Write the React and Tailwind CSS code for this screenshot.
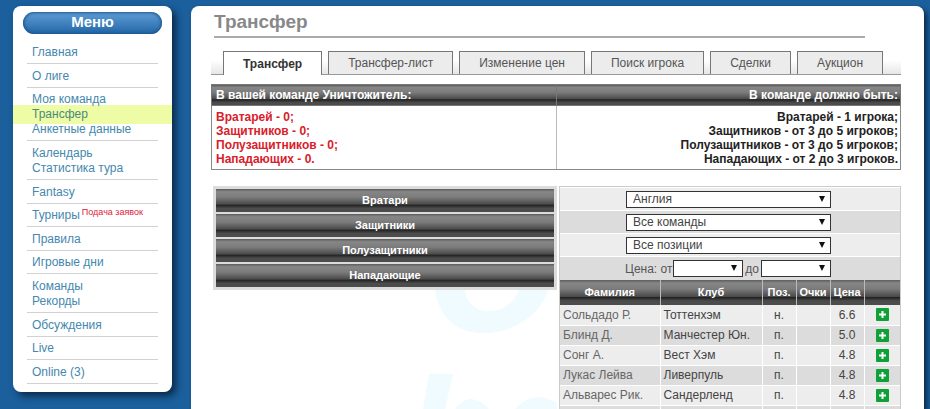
import React from 'react';

const menu = [
    [{ label: 'Главная' }],
    [{ label: 'О лиге' }],
    [{ label: 'Моя команда' }, { label: 'Трансфер', active: true }, { label: 'Анкетные данные' }],
    [{ label: 'Календарь' }, { label: 'Статистика тура' }],
    [{ label: 'Fantasy' }],
    [{ label: 'Турниры', note: 'Подача заявок' }],
    [{ label: 'Правила' }],
    [{ label: 'Игровые дни' }],
    [{ label: 'Команды' }, { label: 'Рекорды' }],
    [{ label: 'Обсуждения' }],
    [{ label: 'Live' }],
    [{ label: 'Online (3)' }],
];

const tabs = ['Трансфер', 'Трансфер-лист', 'Изменение цен', 'Поиск игрока', 'Сделки', 'Аукцион'];

const lines = ['Вратари', 'Защитники', 'Полузащитники', 'Нападающие'];

const players = [
    { name: 'Сольдадо Р.', club: 'Тоттенхэм', pos: 'н.', price: '6.6' },
    { name: 'Блинд Д.', club: 'Манчестер Юн.', pos: 'п.', price: '5.0' },
    { name: 'Сонг А.', club: 'Вест Хэм', pos: 'п.', price: '4.8' },
    { name: 'Лукас Лейва', club: 'Ливерпуль', pos: 'п.', price: '4.8' },
    { name: 'Альварес Рик.', club: 'Сандерленд', pos: 'п.', price: '4.8' },
    { name: '', club: '', pos: '', price: '' },
];

const bar = 'bg-[linear-gradient(#5c5c5c_0%,#868686_12%,#7c7c7c_35%,#4a4a4a_66%,#232323_70%,#4c4c4c_84%,#4c4c4c_100%)]';

function Select({ label, value, className }) {
    return (
        <div className={`relative ${className}`}>
            <select
                aria-label={label}
                defaultValue={value}
                className="block h-[17px] w-full appearance-none border border-[#333] bg-white pl-1.5 text-xs leading-[14px] text-[#444]"
            >
                <option>{value}</option>
            </select>
            <svg className="pointer-events-none absolute top-[5px] right-1.5 h-1.5 w-1.5" viewBox="0 0 6 6">
                <path d="M0 0h6L3 6z" fill="#111" />
            </svg>
        </div>
    );
}

function Sidebar() {
    return (
        <nav className="w-[159px] shrink-0 self-start rounded-lg bg-white pt-1.5 pb-2 shadow-[4px_4px_7px_#0a2a4a]">
            <h2 className="mx-2.5 h-[22px] rounded-full bg-linear-to-b from-[#5f9fd6] to-[#2265a6] text-center text-[15px] leading-[20px] font-bold text-white shadow-[inset_0_0_3px_1px_#1b5590]">
                Меню
            </h2>
            <ul className="mt-[7px] flex min-h-[343px] flex-col justify-between text-xs leading-[15px] text-[#4488ae]">
                {menu.map((group) => (
                    <li key={group[0].label} className="pt-1 after:mx-3.5 after:mt-[3px] after:block after:h-px after:bg-[#d2d2d2]">
                        {group.map((item) => (
                            <a
                                key={item.label}
                                href="#"
                                className={item.active ? '-my-0.5 block bg-[#eefca6] py-0.5 pl-[19px] text-[#4a8a80]' : 'relative block pl-[19px]'}
                            >
                                {item.label}
                                {item.note && <sup className="ml-0.5 text-[9px] text-[#e0203a]">{item.note}</sup>}
                            </a>
                        ))}
                    </li>
                ))}
            </ul>
        </nav>
    );
}

function Tabs() {
    return (
        <div className="mt-[13px] flex gap-1.5 border-b border-[#999] bg-linear-to-b from-white from-40% to-[#e6e6e6] px-3">
            {tabs.map((tab, i) => (
                <button
                    key={tab}
                    type="button"
                    className={
                        i === 0
                            ? '-mb-px h-6 border border-b-0 border-[#777] bg-white px-[19px] text-xs font-bold text-[#333]'
                            : 'h-[23px] border border-b-0 border-[#777] bg-[#ececec] px-[19px] text-xs text-[#555]'
                    }
                >
                    {tab}
                </button>
            ))}
        </div>
    );
}

function Summary() {
    return (
        <table className="mt-[9px] w-full table-fixed border-collapse text-xs leading-[14px] font-bold">
            <thead>
                <tr className={`h-[21px] text-white ${bar}`}>
                    <th className="border border-[#777] py-0 pr-0.5 pl-1 text-left">В вашей команде Уничтожитель:</th>
                    <th className="border border-[#777] border-l-[#aaa] py-0 pr-0.5 pl-1 text-right">В команде должно быть:</th>
                </tr>
            </thead>
            <tbody>
                <tr>
                    <td className="border border-[#888] border-r-[#bbb] pt-1 pr-0.5 pb-[3px] pl-1 text-[#d8202a]">
                        Вратарей - 0;<br />Защитников - 0;<br />Полузащитников - 0;<br />Нападающих - 0.
                    </td>
                    <td className="border border-[#888] pt-1 pr-0.5 pb-[3px] pl-1 text-right text-[#222]">
                        Вратарей - 1 игрока;<br />Защитников - от 3 до 5 игроков;<br />Полузащитников - от 3 до 5 игроков;<br />Нападающих - от 2 до 3 игроков.
                    </td>
                </tr>
            </tbody>
        </table>
    );
}

function Market() {
    return (
        <div className="w-[342px] shrink-0 border border-b-0 border-[#ccc] bg-white">
            <div className="flex flex-col pt-px text-xs text-[#555]">
                {[['Страна', 'Англия'], ['Команда', 'Все команды'], ['Позиция', 'Все позиции']].map(([label, value], i) => (
                    <div key={label} className={`flex h-[23px] items-center border-b border-white pl-[66px] ${i % 2 ? 'bg-[#dcdcdc]' : 'bg-[#ededed]'}`}>
                        <Select label={label} value={value} className="w-[205px]" />
                    </div>
                ))}
                <div className="flex h-[23px] items-center bg-[#dcdcdc] pl-[65px]">
                    <span className="w-12">Цена: от</span>
                    <Select label="Цена от" value="" className="w-[70px]" />
                    <span className="w-[18px] text-center">до</span>
                    <Select label="Цена до" value="" className="w-[70px]" />
                </div>
            </div>
            <table className="w-full table-fixed border-collapse text-xs">
                <colgroup>
                    <col className="w-[100px]" />
                    <col />
                    <col className="w-[34px]" />
                    <col className="w-[34px]" />
                    <col className="w-[34px]" />
                    <col className="w-[36px]" />
                </colgroup>
                <thead>
                    <tr className={`h-[25px] text-[11px] text-white ${bar}`}>
                        {['Фамилия', 'Клуб', 'Поз.', 'Очки', 'Цена', ''].map((h, i) => (
                            <th key={i} className="border-r border-[#bbb] p-0 last:border-r-0">{h}</th>
                        ))}
                    </tr>
                </thead>
                <tbody>
                    {players.map((p, i) => (
                        <tr key={i} className="h-5 text-[#444] odd:bg-[#ededed] even:bg-[#dcdcdc]">
                            <td className="border-r border-b border-white py-0 pl-[3px] text-[#666]">{p.name}</td>
                            <td className="border-r border-b border-white py-0 pl-[3px]">{p.club}</td>
                            <td className="border-r border-b border-white p-0 text-center">{p.pos}</td>
                            <td className="border-r border-b border-white p-0" />
                            <td className="border-r border-b border-white p-0 text-center">{p.price}</td>
                            <td className="border-b border-white p-0">
                                <button type="button" aria-label="Купить" className="mx-auto block h-[13px] w-[13px]">
                                    <svg viewBox="0 0 13 13">
                                        <rect width="13" height="13" rx="1" fill="#10a038" />
                                        <path d="M6.5 3v7M3 6.5h7" stroke="#fff" strokeWidth="2" />
                                    </svg>
                                </button>
                            </td>
                        </tr>
                    ))}
                </tbody>
            </table>
        </div>
    );
}

function Watermark() {
    return (
        <svg className="pointer-events-none absolute top-[104px] right-0 h-[119px] w-[140px]" viewBox="0 0 140 119" fill="#f0fbff">
            <path d="M18 0C22 28 40 43 66 43 98 43 124 24 131 0H102C96 14 86 21 72 21 58 21 49 12 48 0z" />
            <path d="M12 84h24l-8 35H6z" />
            <path d="M38 119q15-20 34 0zM98 119q18-20 42-6v6z" />
        </svg>
    );
}

export default function App() {
    return (
        <div className="flex h-screen gap-[19px] overflow-hidden bg-[#1b5f9c] pt-1.5 pr-1.5 pl-[13px] font-['Liberation_Sans',Arial,sans-serif]">
            <Sidebar />
            <main className="min-w-0 flex-1 rounded-t-lg bg-white pr-[23px] pl-5 shadow-[3px_3px_5px_#0a2a4a]">
                <h1 className="mr-9 ml-[3px] border-b-2 border-[#aaa] pt-1 pb-0.5 text-[19px] leading-6 font-bold text-[#888]">Трансфер</h1>
                <Tabs />
                <Summary />
                <div className="mt-4 flex gap-0.5 pl-0.5">
                    <div className="relative min-w-0 flex-1">
                        <Watermark />
                        <div className="relative flex flex-col gap-0.5 border-[3px] border-[#dcdcdc] bg-[#dcdcdc]">
                            {lines.map((line) => (
                                <div key={line} className={`h-[23px] text-center text-[11px] leading-[23px] font-bold text-white ${bar}`}>
                                    {line}
                                </div>
                            ))}
                        </div>
                    </div>
                    <Market />
                </div>
            </main>
        </div>
    );
}
